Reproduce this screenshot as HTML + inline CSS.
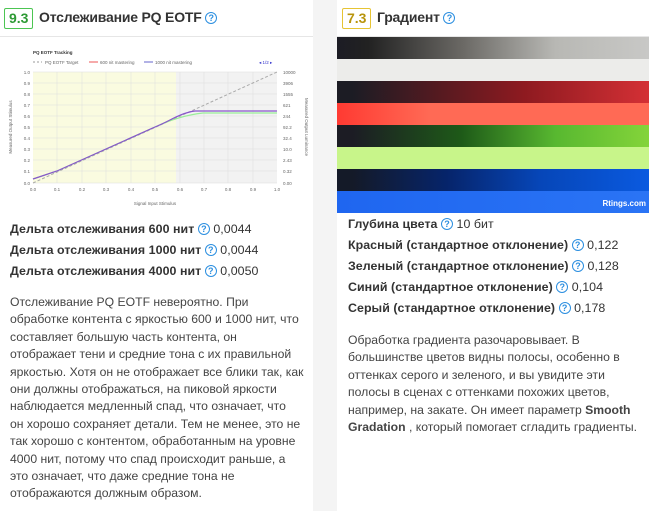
<!DOCTYPE html>
<html><head><meta charset="utf-8"><style>
body{margin:0;width:649px;height:511px;background:#f4f4f4;font-family:"Liberation Sans",sans-serif;color:#333;overflow:hidden;position:relative}
.card{position:absolute;top:0;background:#fff;height:511px;overflow:hidden}
.hdr{height:36px;border-bottom:1px solid #e6e6e6;position:relative}
.badge{position:absolute;top:8px;height:19px;border:1px solid;border-radius:2px;font-weight:bold;font-size:14px;line-height:19px;padding:0 4px}
.title{position:absolute;top:9px;font-weight:bold;font-size:14px;letter-spacing:-0.2px;color:#333}
.q{display:inline-block;width:10px;height:10px;border:1.3px solid #2c8fe0;border-radius:50%;color:#2c8fe0;font-size:9px;line-height:10px;text-align:center;font-weight:bold;vertical-align:1px;letter-spacing:0}
.t{position:absolute;font-size:12.4px;white-space:nowrap;letter-spacing:0.05px}
.t b{color:#333}
.p{position:absolute;font-size:12.2px;letter-spacing:0;line-height:17.4px;color:#444;white-space:nowrap}
</style></head><body>
<div class="card" style="left:0;width:313px">
 <div class="hdr"><div class="badge" style="left:4px;color:#2e9a35;border-color:#4cc552">9.3</div>
 <div class="title" style="left:39px">Отслеживание PQ EOTF <span class="q">?</span></div></div>
 <svg style="position:absolute;left:0;top:37px" width="313" height="175" font-family="Liberation Sans" font-size="4.5" fill="#666">
  <text x="33" y="17" font-weight="bold" fill="#333">PQ EOTF Tracking</text>
  <line x1="33" y1="25" x2="42" y2="25" stroke="#999" stroke-dasharray="2 2"/><text x="45" y="27">PQ EOTF Target</text>
  <line x1="89" y1="25" x2="98" y2="25" stroke="#e55"/><text x="100" y="27">600 nit mastering</text>
  <line x1="144" y1="25" x2="153" y2="25" stroke="#66c"/><text x="155" y="27">1000 nit mastering</text>
  <text x="259" y="27" fill="#33c">◂ 1/2 ▸</text>
  <rect x="33" y="35" width="143" height="111" fill="#fafbe0"/>
  <rect x="176" y="35" width="101" height="111" fill="#f2f2f2"/>
  <g stroke="#ddd" stroke-width="0.5">
   <line x1="33" y1="35" x2="277" y2="35"/><line x1="33" y1="46" x2="277" y2="46"/><line x1="33" y1="57" x2="277" y2="57"/><line x1="33" y1="68" x2="277" y2="68"/><line x1="33" y1="79" x2="277" y2="79"/><line x1="33" y1="90" x2="277" y2="90"/><line x1="33" y1="101" x2="277" y2="101"/><line x1="33" y1="112" x2="277" y2="112"/><line x1="33" y1="123" x2="277" y2="123"/><line x1="33" y1="134" x2="277" y2="134"/><line x1="33" y1="146" x2="277" y2="146"/>
   <line x1="57" y1="35" x2="57" y2="146"/><line x1="82" y1="35" x2="82" y2="146"/><line x1="106" y1="35" x2="106" y2="146"/><line x1="131" y1="35" x2="131" y2="146"/><line x1="155" y1="35" x2="155" y2="146"/><line x1="180" y1="35" x2="180" y2="146"/><line x1="204" y1="35" x2="204" y2="146"/><line x1="228" y1="35" x2="228" y2="146"/><line x1="253" y1="35" x2="253" y2="146"/>
  </g>
  <line x1="33" y1="146" x2="277" y2="35" stroke="#aaa" stroke-dasharray="3 2"/>
  <path d="M33 142 L57 134 L155 90 C170 83 185 78 203 76 L277 76" stroke="#9e9" fill="none" stroke-width="1.2"/>
  <path d="M33 142 L57 134 L155 90 C170 84 180 76 195 74 L277 74" stroke="#85c" fill="none" stroke-width="1.2"/>
  <g text-anchor="end"><text x="30" y="37">1.0</text><text x="30" y="48">0.9</text><text x="30" y="59">0.8</text><text x="30" y="70">0.7</text><text x="30" y="81">0.6</text><text x="30" y="92">0.5</text><text x="30" y="103">0.4</text><text x="30" y="114">0.3</text><text x="30" y="125">0.2</text><text x="30" y="136">0.1</text><text x="30" y="148">0.0</text></g>
  <g><text x="283" y="37">10000</text><text x="283" y="48">3906</text><text x="283" y="59">1555</text><text x="283" y="70">621</text><text x="283" y="81">244</text><text x="283" y="92">92.2</text><text x="283" y="103">32.4</text><text x="283" y="114">10.0</text><text x="283" y="125">2.43</text><text x="283" y="136">0.32</text><text x="283" y="148">0.00</text></g>
  <g text-anchor="middle"><text x="33" y="154">0.0</text><text x="57" y="154">0.1</text><text x="82" y="154">0.2</text><text x="106" y="154">0.3</text><text x="131" y="154">0.4</text><text x="155" y="154">0.5</text><text x="180" y="154">0.6</text><text x="204" y="154">0.7</text><text x="228" y="154">0.8</text><text x="253" y="154">0.9</text><text x="277" y="154">1.0</text>
  <text x="155" y="168">Signal Input Stimulus</text></g>
  <text transform="translate(12,90) rotate(-90)" text-anchor="middle">Measured Output Stimulus</text>
  <text transform="translate(305,90) rotate(90)" text-anchor="middle">Measured Output Luminance</text>
 </svg>
 <div class="t" style="left:10px;top:222px"><b>Дельта отслеживания 600 нит</b> <span class="q">?</span> 0,0044</div>
 <div class="t" style="left:10px;top:243px"><b>Дельта отслеживания 1000 нит</b> <span class="q">?</span> 0,0044</div>
 <div class="t" style="left:10px;top:264px"><b>Дельта отслеживания 4000 нит</b> <span class="q">?</span> 0,0050</div>
 <div class="p" style="left:10px;top:294px">Отслеживание PQ EOTF невероятно. При<br>обработке контента с яркостью 600 и 1000 нит, что<br>составляет большую часть контента, он<br>отображает тени и средние тона с их правильной<br>яркостью. Хотя он не отображает все блики так, как<br>они должны отображаться, на пиковой яркости<br>наблюдается медленный спад, что означает, что<br>он хорошо сохраняет детали. Тем не менее, это не<br>так хорошо с контентом, обработанным на уровне<br>4000 нит, потому что спад происходит раньше, а<br>это означает, что даже средние тона не<br>отображаются должным образом.</div>
</div>
<div class="card" style="left:337px;width:312px">
 <div class="hdr"><div class="badge" style="left:5px;color:#b8940c;border-color:#e6c434">7.3</div>
 <div class="title" style="left:40px">Градиент <span class="q">?</span></div></div>
 <div style="position:absolute;left:0;top:37px;width:312px;height:176px">
  <div style="height:22px;background:linear-gradient(90deg,#1c1c24,#222 10%,#6a6864 40%,#b8b8b4 70%,#c8c8c6)"></div>
  <div style="height:22px;background:#ececea"></div>
  <div style="height:22px;background:linear-gradient(90deg,#1c1c24 5%,#5a1a20 35%,#8e1a20 60%,#d43035)"></div>
  <div style="height:22px;background:linear-gradient(90deg,#ff3a32,#ff6a55 30%,#ff6a55)"></div>
  <div style="height:22px;background:linear-gradient(90deg,#1c1c24 5%,#1e5a18 40%,#58b830 70%,#84d43a)"></div>
  <div style="height:22px;background:#c8f58a"></div>
  <div style="height:22px;background:linear-gradient(90deg,#141a28 5%,#06246a 35%,#0646b8 65%,#0a5ae0)"></div>
  <div style="height:22px;background:linear-gradient(90deg,#1f66f0,#2a74f5);position:relative"><span style="position:absolute;right:3px;top:8px;color:#fff;font-size:8px;font-weight:bold">Rtings.com</span></div>
 </div>
 <div class="t" style="left:11px;top:217px"><b>Глубина цвета</b> <span class="q">?</span> 10 бит</div>
 <div class="t" style="left:11px;top:238px"><b>Красный (стандартное отклонение)</b> <span class="q">?</span> 0,122</div>
 <div class="t" style="left:11px;top:259px"><b>Зеленый (стандартное отклонение)</b> <span class="q">?</span> 0,128</div>
 <div class="t" style="left:11px;top:280px"><b>Синий (стандартное отклонение)</b> <span class="q">?</span> 0,104</div>
 <div class="t" style="left:11px;top:301px"><b>Серый (стандартное отклонение)</b> <span class="q">?</span> 0,178</div>
 <div class="p" style="left:11px;top:332px">Обработка градиента разочаровывает. В<br>большинстве цветов видны полосы, особенно в<br>оттенках серого и зеленого, и вы увидите эти<br>полосы в сценах с оттенками похожих цветов,<br>например, на закате. Он имеет параметр <b>Smooth</b><br><b>Gradation</b> , который помогает сгладить градиенты.</div>
</div>
</body></html>
